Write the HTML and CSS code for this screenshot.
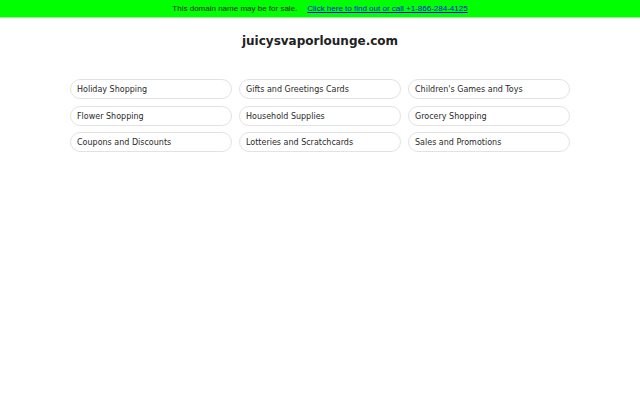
FILE: index.html
```html
<!DOCTYPE html>
<html>
<head>
<meta charset="utf-8">
<link rel="stylesheet" href="styles.css">
</head>
<body>
<div class="banner">
  <span class="banner-text">This domain name may be for sale.</span>
  <a class="banner-link" href="#">Click here to find out or call +1-866-284-4125</a>
</div>
<h1 class="title">juicysvaporlounge.com</h1>
<div class="grid">
  <a class="item" href="#">Holiday Shopping</a>
  <a class="item" href="#">Gifts and Greetings Cards</a>
  <a class="item" href="#">Children's Games and Toys</a>
  <a class="item" href="#">Flower Shopping</a>
  <a class="item" href="#">Household Supplies</a>
  <a class="item" href="#">Grocery Shopping</a>
  <a class="item" href="#">Coupons and Discounts</a>
  <a class="item" href="#">Lotteries and Scratchcards</a>
  <a class="item" href="#">Sales and Promotions</a>
</div>
</body>
</html>
```
FILE: styles.css
```css
html, body {
  margin: 0;
  padding: 0;
  background: #ffffff;
}
body {
  font-family: "DejaVu Sans", sans-serif;
  color: #222222;
}
.banner {
  height: 17px;
  background: #00ff00;
  border-bottom: 1px solid #8ef28e;
  display: flex;
  justify-content: center;
  align-items: center;
  gap: 10px;
  font-family: "Liberation Sans", Arial, sans-serif;
  font-size: 8px;
}
.banner-text {
  color: #1a1a1a;
}
.banner-link {
  color: #0000ee;
  text-decoration: underline;
}
.title {
  margin: 15px 0 0 0;
  text-align: center;
  font-size: 12px;
  font-weight: bold;
  line-height: 16px;
  color: #222222;
}
.grid {
  width: 500px;
  margin: 30px auto 0 auto;
  display: grid;
  grid-template-columns: repeat(3, 1fr);
  column-gap: 7px;
  row-gap: 6.5px;
}
.item {
  display: block;
  height: 18px;
  line-height: 19px;
  border: 1px solid #e2e2e2;
  border-radius: 10px;
  padding: 0 6px;
  font-size: 8px;
  color: #2a2a2a;
  text-decoration: none;
  white-space: nowrap;
  overflow: hidden;
}
```
